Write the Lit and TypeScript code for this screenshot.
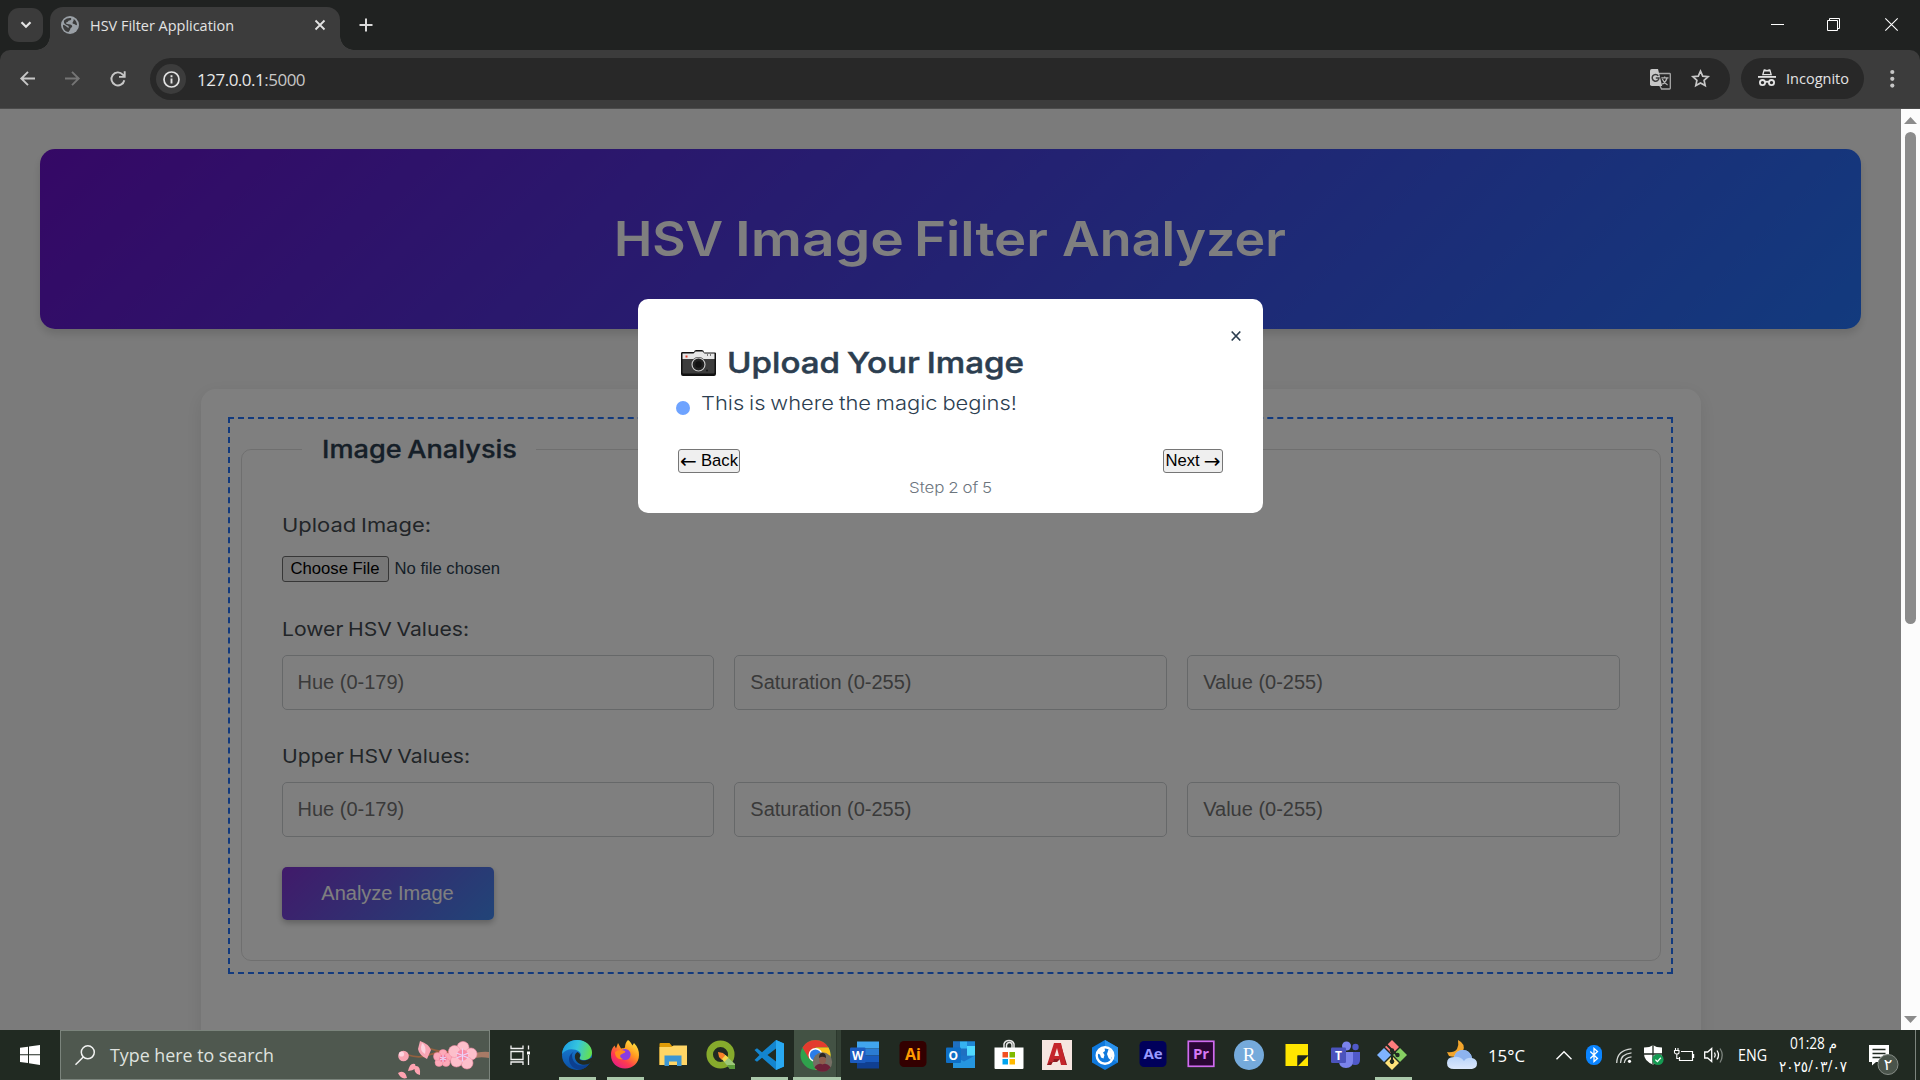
import { LitElement, html, css } from "lit";
import { customElement, property } from "lit/decorators.js";

/* One line of text set to an exact width; the baseline lies `size` px below the top. */
const line = (text: string, width: number, size: number, cls: string) => html`
  <svg class="line" width=${width} height=${Math.round(size * 1.25)}>
    <text class=${cls} x="0" y=${size} textLength=${width} lengthAdjust="spacingAndGlyphs">${text}</text>
  </svg>`;

@customElement("browser-bar")
class BrowserBar extends LitElement {
  static styles = css`
    :host { display: block; }
    svg { display: block; flex: none; overflow: visible; }
    .tabs { height: 50px; background: #202221; display: flex; align-items: flex-start; }
    .search-tabs { width: 35px; height: 34px; margin: 8px 7px 0 8px; border-radius: 11px; background: #3b3b3b; display: grid; place-items: center; }
    .tab { position: relative; box-sizing: border-box; width: 290px; height: 43px; margin-top: 7px; padding-left: 11px; background: #3c3c3c; border-radius: 13px 13px 0 0; display: flex; align-items: flex-start; }
    .tab::before, .tab::after { content: ""; position: absolute; bottom: 0; width: 14px; height: 14px; }
    .tab::before { left: -14px; background: radial-gradient(circle at 0 0, transparent 13.5px, #3c3c3c 14px); }
    .tab::after { right: -14px; background: radial-gradient(circle at 100% 0, transparent 13.5px, #3c3c3c 14px); }
    .globe { margin-top: 9px; }
    .tab-title { margin: 9px 0 0 11px; }
    .tab-close { margin: 13px 0 0 81px; }
    .plus { margin: 18px 0 0 19px; }
    .window { margin-left: auto; display: flex; gap: 43px; padding: 18px 22px 0 0; }
    .win-close { margin-left: 2px; }
    .corners { background: #202221; }
    .toolbar { box-sizing: border-box; height: 59px; padding: 8px 0 0 5px; background: #3c3c3c; border-bottom: 1px solid #4b4b4b; border-radius: 10px 10px 0 0; display: flex; }
    .nav { width: 45px; height: 41px; display: grid; place-items: center; }
    .omnibox { width: 1580px; height: 42px; margin-left: 10px; box-sizing: border-box; padding-left: 6px; border-radius: 21px; background: #282828; display: flex; align-items: flex-start; }
    .info { width: 30px; height: 30px; margin: 6px 11px 0 0; border-radius: 50%; background: #3c3c3c; display: grid; place-items: center; }
    .url-box { margin-top: 10px; font: 17px/24px "Open Sans", sans-serif; letter-spacing: -.5px; color: #e8e8e8; white-space: nowrap; }
    .omni-icons { margin: 11px 20px 0 auto; display: flex; gap: 20px; }
    .incognito { box-sizing: border-box; width: 123px; height: 41px; margin-left: 11px; padding: 11px 0 0 17px; border-radius: 21px; background: #282828; display: flex; gap: 10px; }
    .menu { margin: 12px 0 0 26px; }
    .ui15 { font: 15.2px "Open Sans", sans-serif; fill: #e3e3e3; }
    .dim { color: #c7c7c7; }
  `;
  render() {
    return html`
      <div class="tabs">
        <div class="search-tabs"><svg width="12" height="8" viewBox="0 0 12 8" fill="none" stroke="#e3e3e3" stroke-width="2.2"><path d="M1.5 1.2 6 5.8 10.500 1.200"/></svg></div>
        <div class="tab">
          <svg class="globe" width="18" height="18" viewBox="0 0 18 18"><circle cx="9" cy="9" r="9" fill="#9aa0a6"/><path d="M3 4.500C5 2.200 8 1.600 10 2c.8 1.300-.2 2.300-1.600 2.500-1.600.2-1.200 1.600-2.600 1.800-1.200.2-.8 1.600.4 1.700 2.200.2 4.600.2 5 2 .3 1.500-1.700 1.500-1.900 3 0 1.200-1.300 1.800-1.700 3C3.600 15.500 1.700 12 2 8.700c1.500.3 2.700.8 3.700 2 .5.900 1.900.5 2 1.400.2-1.400.1-2.300-1-2.700C5.100 9 2.300 8 3 4.500z" fill="#3c3c3c"/><path d="M12.500 3c2.300 1.200 3.500 3.500 3.500 6-1.200.6-1.900-.7-3-.9-1.300-.2-1.800-1-1.200-2.100.4-.8 1.300-1.500.7-3z" fill="#3c3c3c"/></svg>
          <div class="tab-title">${line("HSV Filter Application", 144, 15, "ui15")}</div>
          <svg class="tab-close" width="10" height="10" viewBox="0 0 10 10" stroke="#e3e3e3" stroke-width="1.800"><path d="M.5.500l9 9M9.500.500l-9 9"/></svg>
        </div>
        <svg class="plus" width="13" height="14" viewBox="0 0 13 14" stroke="#dadada" stroke-width="2"><path d="M7 .500v13M.5 7h13"/></svg>
        <div class="window">
          <svg width="13" height="13" stroke="#fff"><path d="M0 6.500h13"/></svg>
          <svg width="13" height="13" fill="none" stroke="#fff"><path d="M.5 2.500h10v10H.5zM2.500 2.500v-2h10v10h-2"/></svg>
          <svg class="win-close" width="13" height="13" stroke="#fff" stroke-width="1.100"><path d="M.3.300l12.400 12.400M12.700.300.300 12.700"/></svg>
        </div>
      </div>
      <div class="corners"><div class="toolbar">
        <div class="nav"><svg width="15" height="15" viewBox="0 0 15 15" fill="none" stroke="#c7c7c7" stroke-width="1.900"><path d="M15 7.500H1.500M8 .8 1.300 7.500 8 14.200"/></svg></div>
        <div class="nav"><svg width="15" height="15" viewBox="0 0 15 15" fill="none" stroke="#757575" stroke-width="1.900"><path d="M0 7.500h13.500M7 .8l6.700 6.700L7 14.200"/></svg></div>
        <div class="nav"><svg width="16" height="16" viewBox="0 0 16 16" fill="none" stroke="#c7c7c7" stroke-width="1.900"><path d="M14.300 9.200A6.500 6.500 0 1 1 12.800 3.600L14.600 5.500M14.700.300v5.600H9"/></svg></div>
        <div class="omnibox">
          <div class="info"><svg width="17" height="17" viewBox="0 0 17 17" fill="none" stroke="#e3e3e3" stroke-width="1.700"><circle cx="8.500" cy="8.500" r="7.500"/><path d="M8.500 7.500v5M8.500 4.300v1.900" stroke-width="1.900"/></svg></div>
          <div class="url-box">127.0.0.1<span class="dim">:5000</span></div>
          <div class="omni-icons">
            <svg width="21" height="21" viewBox="0 0 21 21"><path d="M9 4.500h10.500q.8 0 .8.800v13.900q0 .8-.8.800h-7.900L9.500 16" fill="none" stroke="#a8a8a8" stroke-width="1.300"/><path d="M1.800 0H8l4.200 17H1.800Q0 17 0 15.200V1.800Q0 0 1.800 0z" fill="#c7c7c7"/><path d="M8.300 6.700A3.400 3.400 0 1 0 9 9H5.800" fill="none" stroke="#3c3c3c" stroke-width="1.500"/><path d="M11.300 8.800h7.200M14.700 7.500v1.300M17 9c-.6 2.800-2.500 5-4.800 6.300M12.300 10c1 2.700 3 4.700 5.300 6" fill="none" stroke="#b5b5b5" stroke-width="1.200"/></svg>
            <svg width="19" height="19" viewBox="0 0 19 19"><path d="M9.500 2.200l2.200 4.900 5.400.6-4 3.600 1.100 5.300-4.700-2.700-4.700 2.700 1.100-5.300-4-3.600 5.400-.6z" fill="none" stroke="#c7c7c7" stroke-width="1.700"/></svg>
          </div>
        </div>
        <div class="incognito">
          <svg width="18" height="18" viewBox="0 0 18 18"><path d="M5.600.6Q6 0 6.800.3L9 .9l2.200-.6q.8-.3 1.200.3L14 6.300H4z" fill="#e3e3e3"/><path d="M6.400 2.400h5.200l.7 2.500H5.700z" fill="#282828"/><path d="M0 7h18v1.800H0z" fill="#e3e3e3"/><g fill="none" stroke="#e3e3e3" stroke-width="1.800"><circle cx="4.500" cy="13.600" r="2.600"/><circle cx="13.500" cy="13.600" r="2.600"/><path d="M7 13.200q2-1.200 4 0"/></g></svg>
          ${line("Incognito", 63, 15, "ui15")}
        </div>
        <svg class="menu" width="5" height="18" viewBox="0 0 5 18" fill="#c7c7c7"><circle cx="2.300" cy="2" r="2.100"/><circle cx="2.300" cy="8.800" r="2.100"/><circle cx="2.300" cy="15.600" r="2.100"/></svg>
      </div></div>`;
  }
}

@customElement("hsv-page")
class HsvPage extends LitElement {
  static styles = css`
    :host { display: block; position: relative; width: 1901px; height: 921px; overflow: hidden; background: #f7f7f7; }
    svg { display: block; flex: none; overflow: visible; }
    .page { padding: 40px; }
    .hero { height: 180px; box-sizing: border-box; padding: 57px 0 0 574px; border-radius: 15px; background: linear-gradient(135deg, #6a11cb 0%, #2575fc 100%); box-shadow: 0 5px 8px rgba(0,0,0,.13); }
    .card { box-sizing: border-box; width: 1500px; height: 760px; margin: 60px auto 0; padding: 40px; border-radius: 15px; background: #fff; box-shadow: 0 5px 19px rgba(0,0,0,.09); }
    .spotlight { height: 533px; margin-left: -1px; padding-left: 1px; outline: 2px dashed #2575fc; outline-offset: 10px; }
    fieldset { margin: 0; height: 532px; box-sizing: border-box; padding: 40px 39.500px 40px 40px; border: 1px solid #dfdfdf; border-radius: 10px; }
    legend { box-sizing: border-box; width: 234px; height: 40px; margin-left: 20px; padding: 4px 20px 0; }
    .group { margin-bottom: 30px; }
    .label { height: 39px; padding-top: 3px; }
    .row { display: grid; grid-template-columns: repeat(3, 1fr); gap: 20px; }
    .field { box-sizing: border-box; height: 55px; padding: 0 15px; border: 1px solid #cdd0d3; border-radius: 5px; display: flex; align-items: center; font: 20px "Liberation Sans", Arial, sans-serif; color: #757575; }
    .file { padding: 5px 0 1px; height: 26px; display: flex; align-items: center; gap: 6px; font: 16.67px "Liberation Sans", Arial, sans-serif; color: #2c3e50; white-space: nowrap; }
    .choose { box-sizing: border-box; width: 107px; height: 26px; display: grid; place-items: center; border: 1px solid #6f6f6f; border-radius: 3px; background: #efefef; color: #000; }
    .analyze { width: 212px; height: 53px; border-radius: 5px; background: linear-gradient(135deg, #8235d5, #4389f0); box-shadow: 0 3px 6px rgba(0,0,0,.25); color: #fff; display: grid; place-items: center; font: 20px "Liberation Sans", Arial, sans-serif; }
    .shade { position: absolute; inset: 0; background: rgba(0,0,0,.5); }
    .modal { position: absolute; left: 638px; top: 190px; width: 625px; height: 214px; box-sizing: border-box; padding: 44px 40px 0; border-radius: 10px; background: #fff; }
    .close { position: absolute; right: 22px; top: 31.500px; }
    .heading { display: flex; gap: 11px; padding-left: 3px; }
    .camera { margin-top: 7px; }
    .text { padding: 9px 0 0 23px; }
    .dot { position: absolute; left: 38px; top: 102px; width: 14px; height: 14px; border-radius: 50%; background: #6ea3ff; }
    .actions { display: flex; justify-content: space-between; margin-top: 34px; }
    .btn { box-sizing: border-box; height: 24px; border: 1px solid #767676; border-radius: 3px; background: #efefef; color: #000; display: flex; justify-content: center; align-items: center; gap: 4px; font: 16.67px "Liberation Sans", Arial, sans-serif; white-space: nowrap; }
    .arrow { width: 17px; display: flex; justify-content: center; font: 20px/20px "DejaVu Sans", sans-serif; }
    .back { width: 62px; }
    .next { width: 60px; }
    .step { padding: 5px 0 0 231px; }
    text { word-spacing: -.06em; }
    .h1 { font: 600 48.200px Inter, sans-serif; fill: #fff; }
    .h2 { font: 500 29px Inter, sans-serif; fill: #2c3e50; stroke: #2c3e50; stroke-width: .5px; }
    .h3 { font: 500 24.200px Inter, sans-serif; fill: #2c3e50; stroke: #2c3e50; stroke-width: .3px; }
    .lab { font: 400 19.300px Inter, sans-serif; fill: #444b51; }
    .body { font: 350 19.300px Inter, sans-serif; fill: #2c3e50; }
    .small { font: 350 14.800px Inter, sans-serif; fill: #6c757d; }
  `;
  private group(label: string, width: number) {
    return html`<div class="group">
      <div class="label">${line(label, width, 20, "lab")}</div>
      <div class="row">${["Hue (0-179)", "Saturation (0-255)", "Value (0-255)"].map((p) => html`<div class="field">${p}</div>`)}</div>
    </div>`;
  }
  render() {
    return html`
      <div class="page">
        <div class="hero">
          <svg width="672" height="62"><text class="h1" y="50"><tspan x="0" textLength="109" lengthAdjust="spacingAndGlyphs">HSV</tspan> <tspan x="121" textLength="169" lengthAdjust="spacingAndGlyphs">Image</tspan> <tspan x="300" textLength="134" lengthAdjust="spacingAndGlyphs">Filter</tspan> <tspan x="448" textLength="224" lengthAdjust="spacingAndGlyphs">Analyzer</tspan></text></svg>
        </div>
        <div class="card"><div class="spotlight">
          <fieldset>
            <legend>${line("Image Analysis", 195, 25, "h3")}</legend>
            <div class="group">
              <div class="label">${line("Upload Image:", 149, 20, "lab")}</div>
              <div class="file"><span class="choose">Choose File</span>No file chosen</div>
            </div>
            ${this.group("Lower HSV Values:", 187)}
            ${this.group("Upper HSV Values:", 188)}
            <div class="analyze">Analyze Image</div>
          </fieldset>
        </div></div>
      </div>
      <div class="shade"></div>
      <div class="modal">
        <svg class="close" width="10" height="10" viewBox="0 0 10 10" stroke="#2c3e50" stroke-width="1.700"><path d="M.7.500l8.600 9M9.300.500.700 9.500"/></svg>
        <div class="heading">
          <svg class="camera" width="35" height="26" viewBox="0 0 35 26"><path d="M13 2.500Q13 0 15 0h6q2 0 2 2.500h11q1 0 1 1V24q0 2-2 2H2q-2 0-2-2V3.500q0-1.500 1-1.500h12z" fill="#111"/><path d="M1.500 3.500h11l2-2h7l2 2h10V9h-32z" fill="#e6e6e6"/><path d="M1.500 9h32v13.500q0 1-1 1h-30q-1 0-1-1z" fill="#3d3d3d"/><path d="M4.500 5.500h2v2h-2z" fill="#e8402a"/><path d="M26 4h1v2h-1zM29 4h1v2h-1z" fill="#777"/><circle cx="17.500" cy="14.500" r="7.600" fill="#333"/><circle cx="17.500" cy="14.500" r="6.500" fill="#222" stroke="#c9c9c9" stroke-width="1.200"/><circle cx="17.500" cy="14.500" r="3.200" fill="#111"/><circle cx="26" cy="20.500" r=".9" fill="#111"/></svg>
          ${line("Upload Your Image", 297, 30, "h2")}
        </div>
        <div class="text">${line("This is where the magic begins!", 316, 20, "body")}</div>
        <div class="dot"></div>
        <div class="actions">
          <div class="btn back"><span class="arrow">←</span>Back</div>
          <div class="btn next">Next<span class="arrow">→</span></div>
        </div>
        <div class="step">${line("Step 2 of 5", 83, 15, "small")}</div>
      </div>`;
  }
}

const apps: Record<string, unknown> = {
  edge: html`<svg class="app" viewBox="0 0 30 30"><defs><linearGradient id="edge-wave" x1="0" y1=".3" x2="1" y2=".5"><stop offset="0" stop-color="#1b9de2"/><stop offset=".5" stop-color="#35c5de"/><stop offset="1" stop-color="#66e14c"/></linearGradient><linearGradient id="edge-base" x1="0" y1="0" x2="0" y2="1"><stop offset="0" stop-color="#1b84d9"/><stop offset="1" stop-color="#0b4fa5"/></linearGradient></defs><circle cx="15" cy="15" r="15" fill="url(#edge-base)"/><path d="M10 15c0 6 4 10.500 10 10.500 3 0 5-.8 7.500-2-2 3-5 5-8 6C12 30 7 25 7 19c0-3 2-6 5-7.500-1 1-2 2-2 3.500z" fill="#0c3f8f"/><path d="M15.500 12c-3 1.500-3 5-2 7.500 2 4.500 8 6.500 13 4.500l3.500-3V26H31v-9l-4 2c-5 2.500-9.500 1.500-9.500-.5 1.500-2 1-5-2-6.500z" fill="#212a22"/><path d="M0 14C1 5 7 0 15 0c9 0 15 6 15 12.500 0 5-4 7.500-8 7.500-3.500 0-5-1.500-4-3 1.500-1.700 1-4-1-5.500C12 8 4 8 0 14z" fill="url(#edge-wave)"/></svg>`,
  firefox: html`<svg class="app" viewBox="0 0 30 30"><defs><linearGradient id="fox" x1=".9" y1="0" x2=".2" y2="1"><stop offset="0" stop-color="#fff24a"/><stop offset=".4" stop-color="#ff9a1f"/><stop offset=".7" stop-color="#ff3c4e"/><stop offset="1" stop-color="#e3198c"/></linearGradient></defs><path d="M18 0c2 1 3 3 4.500 5.500L24 3c4 4 5 8 5 12 0 8-6 13.500-14 13.500S1 23 1 15C1 10 2.500 8 4.500 5.500L6 8.500 8 3l3 5.500c2-.5 3 0 4-1C15 4 16 2 18 0z" fill="url(#fox)"/><circle cx="15" cy="14.500" r="5.600" fill="#8a3be2"/><path d="M5 12c3-2 6-3 10-1 1 1.500-1 2-3 3-3 1-2 4 1 5-5 1-8-2-8-7z" fill="#ff8a1c"/></svg>`,
  explorer: html`<svg class="app" viewBox="0 0 30 30"><path d="M1.500 4Q1.500 3 2.500 3h9l2.500 3H29v19H1.500z" fill="#e09b07"/><path d="M1.500 7h12l2-1.500H29V25H1.500z" fill="#ffd566"/><path d="M6.500 15.500h17V26h-4.500v-4.500h-8V26H6.500z" fill="#3c96d4"/></svg>`,
  qgis: html`<svg class="app" viewBox="0 0 30 30"><circle cx="14.500" cy="14.500" r="10.800" fill="none" stroke="#86ab2c" stroke-width="6.500"/><path d="M18 14l11 10v5h-5L15 18z" fill="#9dc878"/><path d="M21 25l3 4h5v-4z" fill="#5b9b3a"/><path d="M12 12l5 1 3 3-4 4-3-3z" fill="#f7812a"/><path d="M16 19l3.500-4 3 2.700-4 4z" fill="#f6d84a"/></svg>`,
  vscode: html`<svg class="app" viewBox="0 0 30 30"><path d="M22 0l8 3.500v23L22 30 8 17.800l-5 4L.5 20l5-5-5-5L3 8.200l5 4z" fill="#1385cf"/><path d="M22 8.500V21.500L13.500 15z" fill="#212a22"/><path d="M22 0l8 3.500v23L22 30z" fill="#29a9f2"/></svg>`,
  chrome: html`<svg class="app" viewBox="1.500 0 30 30"><circle cx="15" cy="15" r="15" fill="#2fa24c"/><path d="M2 7.500A15 15 0 0 1 28 7.500H15L8.500 18.800z" fill="#e33b2e"/><path d="M28 7.500A15 15 0 0 1 15 30l6.500-11.300L15 7.500z" fill="#fcc31e"/><circle cx="15" cy="15" r="7" fill="#fff"/><circle cx="15" cy="15" r="5.600" fill="#2b7de9"/><g><circle cx="22" cy="22" r="9.700" fill="#746f64"/><path d="M14 27.500q2-4 8-4t8 4q-3 4.200-8 4.200t-8-4.200z" fill="#6d2138"/><ellipse cx="22" cy="19.500" rx="3.500" ry="5" fill="#8d5d4e"/><path d="M18.500 18q0-5 3.500-5t3.500 5q-3.500-2.500-7 0z" fill="#2a2523"/></g></svg>`,
  word: html`<svg class="app" viewBox="1 0 30 30"><path d="M8 1.500h22v7H8z" fill="#41a5ee"/><path d="M8 8.500h22v7H8z" fill="#2b7cd3"/><path d="M8 15.500h22V22H8z" fill="#185abd"/><path d="M8 22h22v6.500H8z" fill="#103f91"/><rect x="1" y="7.500" width="15.500" height="15.500" rx="1" fill="#1c5bbf"/><text x="8.700" y="19.500" class="b12">W</text></svg>`,
  ai: html`<svg class="app" viewBox="0 0 30 30"><rect x="1.500" y="1" width="27" height="26" rx="4.500" fill="#330000"/><text x="15" y="19.500" class="b16 orange">Ai</text></svg>`,
  outlook: html`<svg class="app" viewBox="1 0 30 30"><path d="M8 1.500h22V28H8z" fill="#1b74c8"/><path d="M8 1.500h7v7H8zM15 8.500h7v7h-7z" fill="#1f6fc0"/><path d="M15 1.500h7v7h-7zM22 8.500h7v7h-7z" fill="#35b2f0"/><path d="M22 6h8v9.500h-8z" fill="#50d9ff"/><path d="M22 1.500h8V6h-8z" fill="#1f86d4"/><path d="M8 28V15.500l11 6 11-6V28z" fill="#2596e0"/><rect x="1" y="7.500" width="15" height="15.500" rx="1" fill="#0f6fc6"/><text x="8.400" y="19.500" class="b12">O</text></svg>`,
  store: html`<svg class="app" viewBox="0 0 30 30"><path d="M10 8V4q1-3.500 5-3.500T20 4v4M12.500 8V5q.5-2.500 3-2.500T18 5v3" fill="none" stroke="#e8e8e8" stroke-width="1.500"/><path d="M.5 7.500h29V28q0 1-1 1h-27q-1 0-1-1z" fill="#fff"/><path d="M8.500 12H14v5.500H8.500z" fill="#f25022"/><path d="M15.500 12H21v5.500h-5.500z" fill="#7fba00"/><path d="M8.500 19H14v5.500H8.500z" fill="#00a4ef"/><path d="M15.500 19H21v5.500h-5.500z" fill="#ffb900"/></svg>`,
  autocad: html`<svg class="app" viewBox="0 0 30 30"><path d="M0 0h30v30H0z" fill="#f6e5e0"/><path d="M19 5l6 20h-4L15 8z" fill="#8f1b21"/><path d="M12 3h7l5 22h-5l-1.500-6h-5L9 25H5z" fill="#c4252b"/><path d="M15 8l2 8h-4.500z" fill="#f6e5e0"/><path d="M5 25l3-3h7l3-3h-6l-3 6z" fill="#8f1b21"/></svg>`,
  arcgis: html`<svg class="app" viewBox="0 0 30 30"><path d="M15 0l13 7.500v15L15 30 2 22.500v-15z" fill="#1079dd"/><path d="M15 0l13 7.500v15L15 15z" fill="#2b93ee"/><circle cx="15" cy="15.500" r="8.300" fill="#1079dd" stroke="#fff" stroke-width="2.400"/><path d="M8 10.500q3-3 6.500-3l.5 3.500-2 1.500 1.500 2.500-1 3.500-2.500-1-1-3-2.500-1zM18.500 9.500l3.500 2 .5 4-2 4.500-2-2-1.500-4z" fill="#fff"/></svg>`,
  ae: html`<svg class="app" viewBox="0 0 30 30"><rect x="1.500" y="1" width="27" height="26" rx="4.500" fill="#00005b"/><text x="15" y="19.300" class="b15 lilac">Ae</text></svg>`,
  pr: html`<svg class="app" viewBox="0 0 30 30"><rect x="2.300" y="1.300" width="25.500" height="25" fill="#2a0634" stroke="#d16af0" stroke-width="1.700"/><text x="15" y="18.700" class="b15 pink">Pr</text></svg>`,
  r: html`<svg class="app" viewBox="0 0 30 30"><circle cx="15" cy="15" r="15" fill="#75aadb"/><text x="15" y="21.200" class="serif">R</text></svg>`,
  notes: html`<svg class="app" viewBox="0 0 30 30"><path d="M3.500 4H26v11.500H15.500V26h-12z" fill="#ffe500"/><path d="M15.500 15.500H26L15.500 26z" fill="#1c241d"/><path d="M26 16v10H16z" fill="#ffe500"/></svg>`,
  teams: html`<svg class="app" viewBox="0 0 30 30"><circle cx="25.500" cy="7" r="3.200" fill="#5059c9"/><circle cx="16.500" cy="6" r="4.500" fill="#7b83eb"/><path d="M20 12h10v8q0 5-5 5-4 0-5-4z" fill="#5059c9"/><path d="M9 12h14v9q0 7-7 7t-7-7z" fill="#7b83eb"/><rect x="1" y="7.500" width="15" height="15.500" rx="1.200" fill="#4b53bc"/><text x="8.500" y="19.500" class="b12">T</text></svg>`,
  git: html`<svg class="app" viewBox="1 0 30 30"><path d="M15 0l7 7-7 7-7-7z" fill="#ff7d7d"/><path d="M7 8l7 7-7 7-7-7z" fill="#7fb3ff"/><path d="M23 8l7 7-7 7-7-7z" fill="#86cf62"/><path d="M15 16l7 7-7 7-7-7z" fill="#ffe27a"/><path d="M9 4l11 11M15 10v14" stroke="#212a22" stroke-width="2"/><g fill="#212a22"><circle cx="15" cy="10.500" r="2.200"/><circle cx="20.500" cy="15" r="2.200"/><circle cx="15" cy="21.500" r="2.300"/></g></svg>`,
};

@customElement("task-bar")
class TaskBar extends LitElement {
  @property({ attribute: false }) running = ["edge", "firefox", "vscode", "git"];
  static styles = css`
    :host { display: flex; height: 50px; background: #212a22; }
    svg { display: block; flex: none; overflow: visible; }
    .start { width: 60px; display: grid; place-items: center; }
    .search { box-sizing: border-box; width: 430px; border: 1px solid #7b847c; background: #4f584f; display: flex; align-items: flex-start; }
    .glass { margin: 14px 0 0 14px; }
    .prompt { margin: 12px 0 0 15px; }
    .blossom { margin: 10px 0 0 auto; }
    .view { width: 60px; margin-right: 3px; display: grid; place-items: center; }
    .cell { position: relative; box-sizing: border-box; width: 48px; padding: 10px 0 0 9px; }
    .app { width: 30px; height: 30px; }
    .run::after { content: ""; position: absolute; left: 6px; bottom: 0; width: 37px; height: 3px; background: #aac8aa; }
    .active { background: linear-gradient(90deg, transparent 1px, #435244 1px, #435244 43px, #2c382d 43px, #2c382d 44px, #354236 44px); box-shadow: inset 0 -3px #aac8aa; }
    .weather { margin: 10px 0 0 30px; }
    .temp { margin: 14px 0 0 11px; }
    .chev { margin: 21px 0 0 31px; }
    .bt { margin: 15px 0 0 14px; }
    .wifi { margin: 18px 0 0 14px; }
    .shield { margin: 15px 0 0 12px; }
    .bat { margin: 18px 0 0 10px; }
    .vol { margin: 16px 0 0 10px; }
    .eng { margin: 15px 0 0 14px; }
    .clock { width: 68px; margin-left: 12px; padding-top: 4px; display: grid; justify-items: center; align-content: start; gap: 4px; }
    .bell { margin: 15px 0 0 22px; }
    .edge-line { width: 1px; margin-left: 14px; background: #7d857e; }
    .t17 { font: 18px "Open Sans", sans-serif; fill: #dfe2df; }
    .t16 { font: 17px "Open Sans", sans-serif; fill: #fff; }
    .t15 { font: 15.500px "Open Sans", "DejaVu Sans", sans-serif; fill: #fff; }
    .b12 { font: 700 12px "Open Sans", sans-serif; fill: #fff; text-anchor: middle; }
    .b16 { font: 700 16px "Open Sans", sans-serif; text-anchor: middle; }
    .b15 { font: 700 15px "Open Sans", sans-serif; text-anchor: middle; }
    .orange { fill: #ff9a00; }
    .lilac { fill: #9999ff; }
    .pink { fill: #d678f5; }
    .serif { font: 19px "Liberation Serif", serif; fill: #fff; text-anchor: middle; }
    .badge { font: 16px "DejaVu Sans", sans-serif; fill: #fff; text-anchor: middle; }
  `;
  render() {
    return html`
      <div class="start"><svg width="20" height="20" viewBox="0 0 20 20" fill="#fff"><path d="M0 2.800 8 1.700v7.600H0zM9 1.500 20 0v9.300H9zM0 10.300h8v7.800L0 17zM9 10.300h11V20L9 18.300z"/></svg></div>
      <div class="search">
        <svg class="glass" width="20" height="20" viewBox="0 0 20 20" fill="none" stroke="#f2f3f2" stroke-width="1.500"><circle cx="12.800" cy="7.300" r="6.500"/><path d="M8.300 12 .5 19.800"/></svg>
        <div class="prompt">${line("Type here to search", 164, 19, "t17")}</div>
        <svg class="blossom" width="91" height="38" viewBox="0 0 91 38">
          <path d="M10 14q12 4 24-1l8-3M26 5q16 8 32 5M34 13q18-4 32 0" fill="none" stroke="#94603f" stroke-width="1.800"/><path d="M70 14q12-4 21-3v6q-12-2-20 2z" fill="#a87a66"/>
          <g fill="#f8a5b4"><circle cx="5.500" cy="15" r="5.300"/><path d="M22 0q9 3 11 9l-4 9q-8-4-9-10z"/></g><path d="M24 2q5 3 3 11-6-3-3-11z" fill="#fcd3df"/><circle cx="3.500" cy="13" r="2.600" fill="#fcd3df"/>
          <g fill="#ffa3b1"><path d="M0 32q7-4 9 5-6 2-9-5zM10 30q2-9 7-7 3 6-7 7zM17 25q6-1 5 9-7-1-5-9z"/></g>
          <g fill="#fda9b9" stroke="#f3879f" stroke-width=".5"><circle cx="45" cy="12.500" r="4"/><circle cx="50" cy="16" r="4"/><circle cx="48" cy="21.500" r="4"/><circle cx="41" cy="21.500" r="4"/><circle cx="39.500" cy="15.500" r="4"/></g>
          <g fill="#fdbfcb" stroke="#f48fa6" stroke-width=".6"><circle cx="65" cy="6.500" r="6"/><circle cx="73" cy="13" r="6"/><circle cx="69" cy="22" r="6"/><circle cx="58.500" cy="20" r="6"/><circle cx="56.500" cy="10.500" r="6"/></g>
          <circle cx="45" cy="17.500" r="3.600" fill="#f47795"/><circle cx="64.500" cy="14" r="5.500" fill="#f98ca6"/>
          <path d="M64.500 7.500v13M58.500 12l12 5M58.500 17l12-5M45 14v7M42 16l6 3M42 19l6-3" stroke="#ead4fb" stroke-width="1.100"/>
        </svg>
      </div>
      <div class="view"><svg width="20" height="20" viewBox="0 0 20 20" fill="none" stroke="#f2f2f2" stroke-width="1.300"><path d="M1 .5v3h12v-3M1 6.500h12v8H1zM1 20v-3h12v3M18.500.500v4M18.500 10v10"/><path d="M17 6.500h3v3h-3z" fill="#fff" stroke="none"/></svg></div>
      ${Object.entries(apps).map(([id, icon]) => html`<div class="cell ${this.running.includes(id) ? "run" : ""} ${id === "chrome" ? "active" : ""}">${icon}</div>`)}
      <svg class="weather" width="30" height="30" viewBox="0 0 30 30"><defs><linearGradient id="cloud" x1="0" y1="0" x2="0" y2="1"><stop offset="0" stop-color="#a7c9f8"/><stop offset="1" stop-color="#dbe8fc"/></linearGradient></defs><path d="M11 0q8 4 5 11-5 8-14 5l-2-4q7 1 10-3 2-4 1-9z" fill="#f3a52c"/><path d="M7 29q-7 0-7-6t7-6q2-7 9-7t9 8q5 1 5 5.500T25 29z" fill="url(#cloud)"/><path d="M7 17q2-7 9-7t9 8q-5-1-8 3-4-5-10-4z" fill="#8db3ef"/></svg>
      <div class="temp">${line("15°C", 37, 18, "t16")}</div>
      <svg class="chev" width="16" height="9" fill="none" stroke="#fff" stroke-width="1.400"><path d="M.5 8.300 8 .8l7.500 7.500"/></svg>
      <svg class="bt" width="16" height="20" viewBox="0 0 16 20"><rect width="16" height="20" rx="7.500" fill="#0a84ff"/><path d="M4.300 6.500l7.200 7L8 16.500v-13l3.500 3-7.200 7" fill="none" stroke="#fff" stroke-width="1.300"/></svg>
      <svg class="wifi" width="16" height="16" viewBox="0 0 16 16" fill="none" stroke="#d5d8d5" stroke-width="1.300"><path d="M.7 15Q1 2 15.500.800M4.500 15Q4.500 6 15.500 4.800M8.300 15Q8.500 9.500 15.500 8.800"/><circle cx="13.500" cy="13.300" r="1.600" fill="#fff" stroke="none"/></svg>
      <svg class="shield" width="20" height="20" viewBox="0 0 20 20"><path d="M9 0q3 2.500 9 2.500V9q0 7-9 10.500Q0 16 0 9V2.500Q6 2.500 9 0z" fill="#fff"/><path d="M9 0v19M0 9h18" stroke="#212a22" stroke-width="1.300"/><circle cx="14" cy="14.500" r="5.600" fill="#159a52"/><path d="M11.400 14.600l2 2 3.400-3.800" fill="none" stroke="#fff" stroke-width="1.300"/></svg>
      <svg class="bat" width="20" height="14" viewBox="0 0 20 14" fill="none" stroke="#fff" stroke-width="1.200"><path d="M7 3.500h11.500v9H5.500V9M19.600 6v4"/><path d="M1.500 0v2M4 0v2M.5 2.500h4.500v2q0 1.500-2.200 1.500T.5 4.500zM2.800 6v4.500h2" stroke-width="1.100"/></svg>
      <svg class="vol" width="20" height="18" viewBox="0 0 20 18" fill="none" stroke="#fff" stroke-width="1.300"><path d="M.7 6h3l4-3.500v13L3.700 12h-3zM10.500 6.500q1.500 2.500 0 5M13 4.500q3 4.500 0 9"/><path d="M16 2.500q4.500 6.500 0 14" stroke="#7e857f"/></svg>
      <div class="eng">${line("ENG", 29, 16, "t15")}</div>
      <div class="clock">${line("01:28 م", 47, 15, "t15")}${line("٢٠٢٥/٠٣/٠٧", 68, 15, "t15")}</div>
      <svg class="bell" width="32" height="30" viewBox="0 0 32 30"><path d="M0 0h20v17H7l-4 3.500V17H0z" fill="#fff"/><path d="M3.500 4.500h13M3.500 8.500h13M3.500 12.500h8" stroke="#212a22" stroke-width="1.300"/><circle cx="19" cy="19.500" r="10" fill="#4a544b" stroke="#858c86"/><text class="badge" x="19" y="25">٢</text></svg>
      <div class="edge-line"></div>`;
  }
}

@customElement("app-root")
class AppRoot extends LitElement {
  static styles = css`
    :host { display: block; width: 1920px; height: 1080px; overflow: hidden; }
    .view { display: flex; height: 921px; }
    .scroll { box-sizing: border-box; width: 19px; padding: 8px 0 7px; background: #fcfcfc; display: flex; flex-direction: column; align-items: center; }
    .thumb { width: 11px; height: 492px; margin: 8px 0 auto; border-radius: 6px; background: #8b8b8b; }
    svg { display: block; }
  `;
  render() {
    return html`
      <browser-bar></browser-bar>
      <div class="view">
        <hsv-page></hsv-page>
        <div class="scroll">
          <svg width="13" height="7" fill="#8b8b8b"><path d="M0 7 6.500 0 13 7z"/></svg>
          <div class="thumb"></div>
          <svg width="13" height="7" fill="#8b8b8b"><path d="M0 0 6.500 7 13 0z"/></svg>
        </div>
      </div>
      <task-bar></task-bar>`;
  }
}
